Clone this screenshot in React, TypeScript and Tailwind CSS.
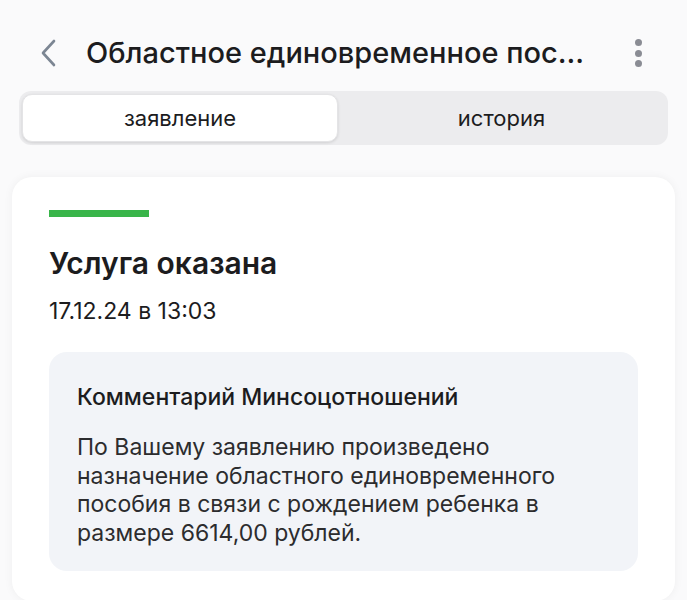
import React from "react";

const font = { fontFamily: "Inter, 'Noto Sans', sans-serif" };

export default function App() {
  return (
    <div
      className="w-[687px] h-[600px] overflow-hidden bg-[#fafafb] text-[#1c1c1e]"
      style={font}
    >
      <div className="flex items-center h-[60px] mt-[23px] pl-[38px] pr-[45px]">
        <svg width="22" height="30" viewBox="0 0 22 30" className="shrink-0">
          <path
            d="M16 3 L5 15 L16 27"
            fill="none"
            stroke="#7c8693"
            strokeWidth="2.6"
            strokeLinecap="round"
            strokeLinejoin="round"
          />
        </svg>
        <div className="ml-[26px] flex-1 text-[29px] font-medium whitespace-nowrap">
          Областное единовременное пос...
        </div>
        <div className="flex flex-col gap-[3.5px] items-center shrink-0">
          <span className="w-[7px] h-[7px] rounded-full bg-[#8a8c94]" />
          <span className="w-[7px] h-[7px] rounded-full bg-[#8a8c94]" />
          <span className="w-[7px] h-[7px] rounded-full bg-[#8a8c94]" />
        </div>
      </div>

      <div className="mx-[19px] mt-[8px] h-[54px] rounded-[12px] bg-[#ececee] p-[3px] flex">
        <div className="w-[316px] rounded-[10px] bg-white shadow-[0_1px_3px_rgba(0,0,0,0.12)] border border-[#e4e4e6] flex items-center justify-center text-[22px]">
          заявление
        </div>
        <div className="flex-1 flex items-center justify-center text-[22px]">
          история
        </div>
      </div>

      <div className="mx-[12px] mt-[32px] rounded-[20px] bg-white shadow-[0_0_10px_rgba(0,0,0,0.05)] px-[37px] pt-[33px] pb-[30px]">
        <div className="w-[100px] h-[7px] bg-[#39b54a]" />
        <div className="mt-[28px] text-[30px] font-semibold leading-[36px]">
          Услуга оказана
        </div>
        <div className="mt-[16px] text-[23px] leading-[28px]">
          17.12.24 в 13:03
        </div>
        <div className="mt-[27px] rounded-[18px] bg-[#f2f4f8] px-[28px] pt-[30px] pb-[24px]">
          <div className="text-[23px] font-medium leading-[30px]">
            Комментарий Минсоцотношений
          </div>
          <div className="mt-[21px] text-[23px] leading-[28.5px] text-[#2c2c2e]">
            По Вашему заявлению произведено
            <br />
            назначение областного единовременного
            <br />
            пособия в связи с рождением ребенка в
            <br />
            размере 6614,00 рублей.
          </div>
        </div>
      </div>
    </div>
  );
}
